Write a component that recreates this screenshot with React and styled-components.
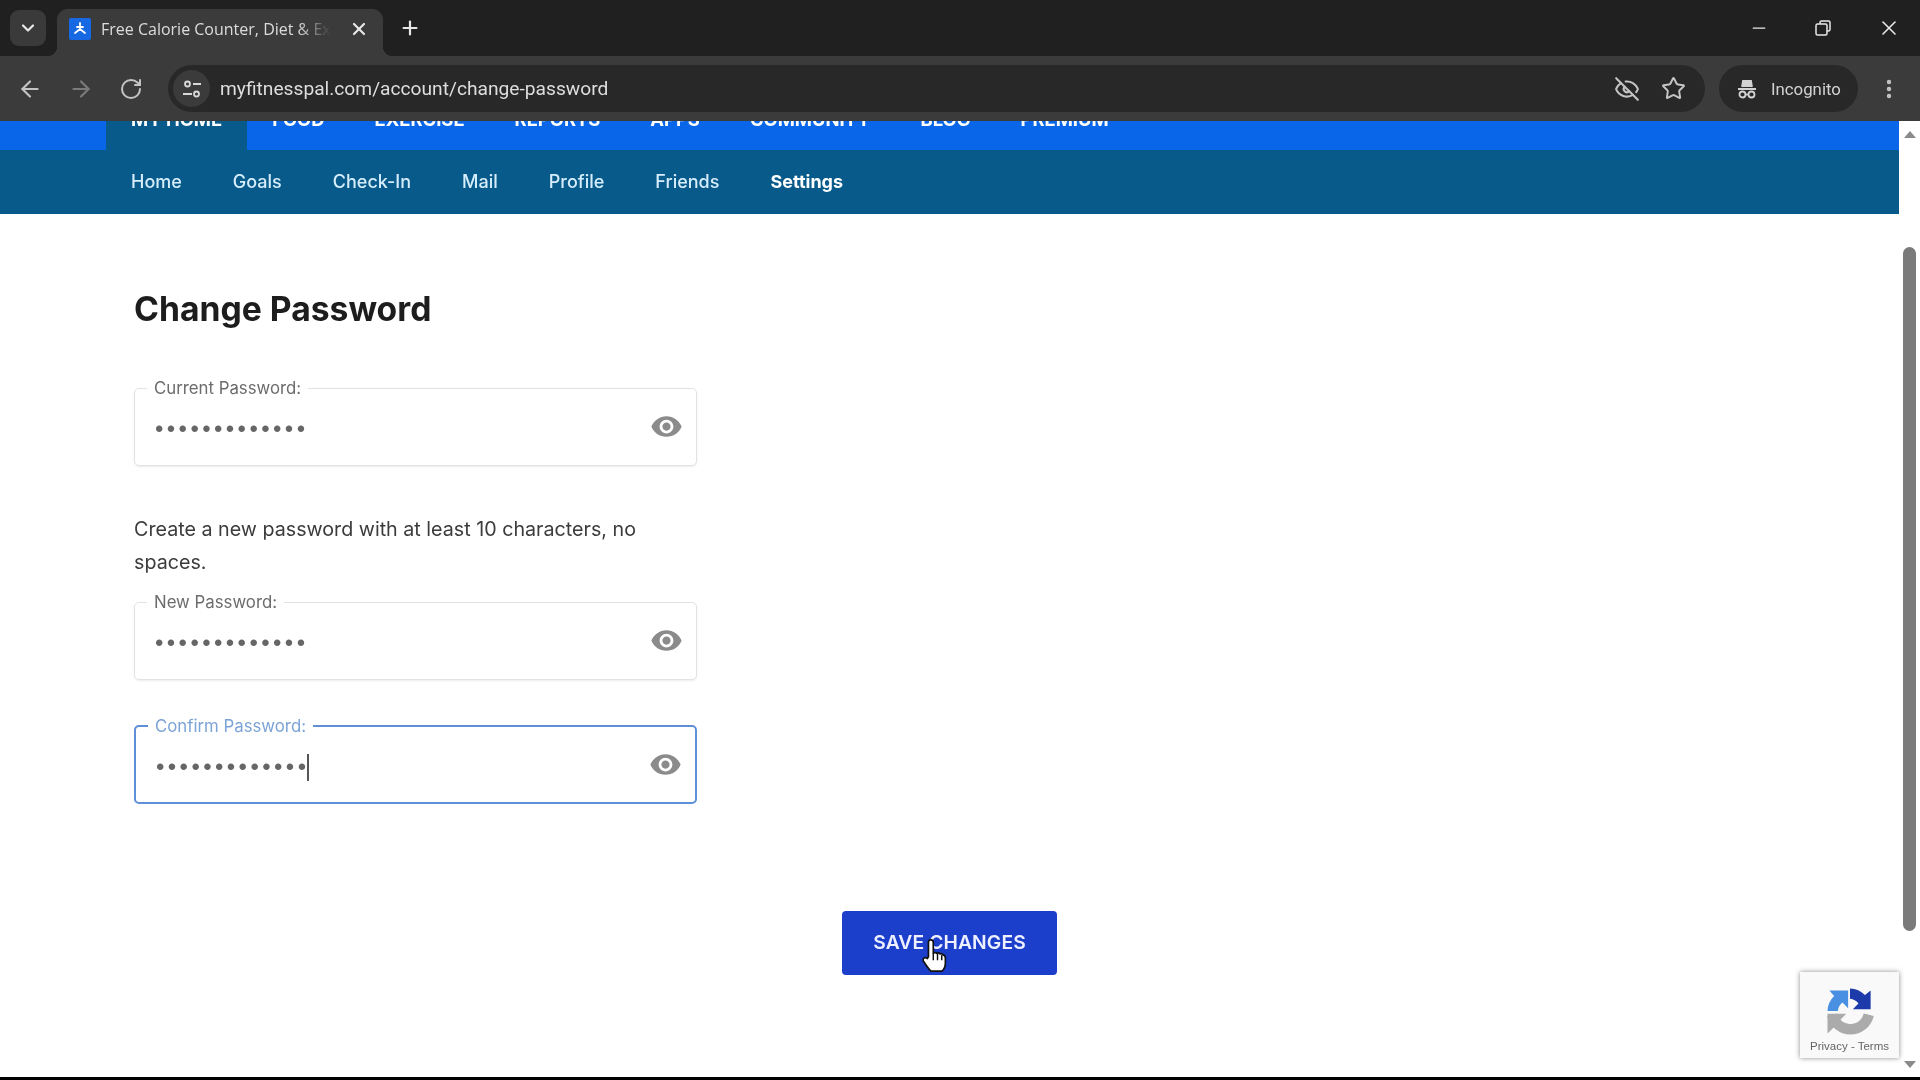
import React from "react";
import styled, { createGlobalStyle } from "styled-components";
import { ArrowLeft, ArrowRight, RotateCw, EyeOff, Star, X, Plus, Minus, ChevronDown, MoreVertical } from "lucide-react";
import { MdVisibility } from "react-icons/md";

const Global = createGlobalStyle`
  html, body { margin: 0; height: 100%; background: #000; overflow: hidden; }
  * { box-sizing: border-box; }
`;

const Frame = styled.div`
  height: 1080px; display: flex; flex-direction: column; overflow: hidden;
  font-family: Inter, "Liberation Sans", sans-serif;
  filter: blur(0.45px);
`;

const TabStrip = styled.div`
  height: 56px; flex: none; background: #202020; display: flex; align-items: flex-end;
  padding-left: 10px; color: #e8e8e8;
`;
const TabSearch = styled.div`
  width: 36px; height: 36px; margin-bottom: 10px; border-radius: 9px; background: #3a3a3a;
  display: flex; align-items: center; justify-content: center;
`;
const Tab = styled.div`
  position: relative; width: 326px; height: 47px; margin-left: 11px; padding: 0 14px 7px 12px;
  background: #3b3b3b; border-radius: 11px 11px 0 0; display: flex; align-items: center;
  &::before, &::after { content: ""; position: absolute; bottom: 0; width: 10px; height: 10px; }
  &::before { left: -10px; background: radial-gradient(circle at 0 0, transparent 10px, #3b3b3b 10.5px); }
  &::after { right: -10px; background: radial-gradient(circle at 100% 0, transparent 10px, #3b3b3b 10.5px); }
`;
const Favicon = styled.svg` width: 22px; height: 22px; flex: none; `;
const TabTitle = styled.span`
  width: 234px; margin-left: 10px; white-space: nowrap; overflow: hidden;
  font: 400 16px "Open Sans", Roboto, sans-serif; color: #dcdcdc;
  -webkit-mask-image: linear-gradient(90deg, #000 84%, transparent 98%);
  mask-image: linear-gradient(90deg, #000 84%, transparent 98%);
`;
const TabClose = styled.div` margin-left: auto; display: flex; `;
const NewTab = styled.div` margin: 0 0 10px 16px; height: 36px; display: flex; align-items: center; `;
const WindowControls = styled.div`
  margin-left: auto; height: 100%; display: flex; align-items: center; gap: 43px; padding: 0 19px 0 0;
`;
const RestoreIcon = styled.svg` width: 22px; height: 22px; `;

const Toolbar = styled.div`
  height: 65px; flex: none; background: #3b3b3b; display: flex; align-items: center;
  padding: 0 10px 0 17px; color: #c4c4c4;
`;
const NavIcons = styled.div` display: flex; align-items: center; gap: 25px; `;
const Omnibox = styled.div`
  width: 1537px; height: 47px; margin-left: 25px; border-radius: 24px; background: #282828;
  display: flex; align-items: center; padding: 0 19px 0 5px;
`;
const SiteBadge = styled.div`
  width: 37px; height: 37px; border-radius: 50%; background: #3b3b3b;
  display: flex; align-items: center; justify-content: center; flex: none;
`;
const Url = styled.span`
  margin-left: 10px; font: 400 19.2px Roboto, sans-serif; color: #dedede;
`;
const OmniIcons = styled.div` margin-left: auto; display: flex; align-items: center; gap: 21px; `;
const IncognitoPill = styled.div`
  width: 139px; height: 47px; margin-left: 14px; border-radius: 24px; background: #282828; flex: none;
  display: flex; align-items: center; gap: 13px; padding-left: 17px;
  font: 400 16.8px Roboto, sans-serif; color: #d2d2d2;
`;
const MenuDots = styled.div` margin-left: 19px; display: flex; `;

const Viewport = styled.div` flex: 1; min-height: 0; display: flex; background: #fff; position: relative; `;
const Page = styled.main` flex: 1; min-width: 0; display: flex; flex-direction: column; overflow: hidden; `;

const PrimaryNav = styled.nav`
  height: 29px; flex: none; background: #0a66e8; display: flex; padding-left: 106px; overflow: hidden;
`;
const PrimaryItem = styled.div`
  height: 29px; padding: 0 25px; background: ${p => (p.$active ? "#085a8a" : "transparent")};
  font: 700 18.4px/18px Inter, sans-serif; color: #fff; white-space: nowrap;
  & > span { margin-top: -11px; display: block; }
`;
const SecondaryNav = styled.nav`
  height: 64px; flex: none; background: #085a8a; display: flex; align-items: center; padding: 0 0 2px 131px; gap: 51px;
`;
const SecondaryItem = styled.a`
  font: ${p => (p.$active ? 700 : 500)} 18px Inter, sans-serif; color: ${p => (p.$active ? "#fff" : "#d6eefb")};
`;

const Content = styled.div` flex: 1; padding: 71px 0 0 134px; position: relative; `;
const Heading = styled.h1`
  margin: 0; font: 700 33.7px/48px Inter, sans-serif; color: #1d1d1d;
`;
const FieldBox = styled.fieldset`
  width: 563px; height: 89px; margin: ${p => p.$top}px 0 0; padding: 0 13px 0 12px;
  border: ${p => (p.$focus ? "2.5px solid #5f8fd6" : "1.5px solid #e2e2e2")}; border-radius: 5px;
  display: block; min-width: 0;
  box-shadow: ${p => (p.$focus ? "none" : "0 1px 2px rgba(0,0,0,.08)")};
`;
const FieldLegend = styled.legend`
  padding: 0 7px; font: 400 16.8px/22px Inter, sans-serif;
  color: ${p => (p.$focus ? "#7ba3d6" : "#6c6c6c")};
`;
const FieldRow = styled.div`
  height: 62px; display: flex; align-items: center; justify-content: space-between; padding-bottom: 7px;
`;
const Dots = styled.span`
  margin: 5px 0 0 8px; display: inline-flex; align-items: center; height: 32px;
  font: 400 24px "Liberation Sans", sans-serif; letter-spacing: 3.4px; color: #666;
`;
const Caret = styled.i`
  display: inline-block; width: 1.5px; height: 27px; background: #555; margin-left: -2px;
`;
const EyeIcon = styled(MdVisibility)` color: #8b8b8b; font-size: 33px; display: block; `;
const Help = styled.p`
  width: 530px; margin: 47px 0 0; font: 400 19.7px/33px Inter, sans-serif; color: #3c3c3c;
`;
const SaveRow = styled.div` margin-top: 107px; width: 100%; padding-right: 134px; display: flex; justify-content: center; `;
const SaveButton = styled.button`
  width: 215px; height: 64px; border: 0; border-radius: 4px; padding: 0 0 2px; background: #1b3ecb; color: #eef0ff;
  font: 600 19.3px Inter, sans-serif; letter-spacing: .1px;
`;
const Pointer = styled.svg`
  position: absolute; left: 920px; top: 816px; width: 29px; height: 37px;
`;
const Recaptcha = styled.div`
  position: absolute; right: 21px; bottom: 19px; width: 99px; height: 86px; background: #f9f9f9;
  box-shadow: 0 0 5px rgba(0,0,0,.45); display: flex; flex-direction: column; align-items: center; padding-top: 9px;
`;
const RecaptchaMark = styled.svg` width: 60px; height: 60px; `;
const RecaptchaLinks = styled.span`
  font: 400 11.5px "Liberation Sans", sans-serif; color: #666; margin-top: -1px;
`;
const Scrollbar = styled.aside`
  width: 21px; flex: none; background: #fff; display: flex; flex-direction: column; align-items: center; padding: 10px 0 9px;
`;
const ScrollArrow = styled.div`
  width: 0; height: 0; border-left: 6px solid transparent; border-right: 6px solid transparent;
  ${p => (p.$down ? "border-top: 7px solid #8a8a8a;" : "border-bottom: 7px solid #8a8a8a;")}
`;
const ScrollTrack = styled.div` flex: 1; width: 100%; padding: 109px 0 0 4px; `;
const ScrollThumb = styled.div` width: 13px; height: 684px; background: #7a7a7a; border-radius: 7px; `;
const BottomEdge = styled.div` height: 3px; flex: none; background: #000; `;

function PasswordField({ label, top, focus }) {
  return (
    <FieldBox $top={top} $focus={focus}>
      <FieldLegend $focus={focus}>{label}</FieldLegend>
      <FieldRow>
        <Dots>•••••••••••••{focus && <Caret />}</Dots>
        <EyeIcon />
      </FieldRow>
    </FieldBox>
  );
}

const primary = ["MY HOME", "FOOD", "EXERCISE", "REPORTS", "APPS", "COMMUNITY", "BLOG", "PREMIUM"];
const secondary = ["Home", "Goals", "Check-In", "Mail", "Profile", "Friends", "Settings"];
const arrow = "M32 8A24 24 0 0 1 48 15L54 10V30H35l6-6A13 13 0 0 0 32 19Z";

export default function App() {
  return (
    <Frame>
      <Global />
      <TabStrip>
        <TabSearch><ChevronDown size={20} strokeWidth={2.6} /></TabSearch>
        <Tab>
          <Favicon viewBox="0 0 22 22">
            <rect width="22" height="22" rx="2" fill="#1668e3" />
            <path d="M11 5v6M11 11l-5 4M11 11l5 4M8 9l6 0" stroke="#fff" strokeWidth="1.8" fill="none" strokeLinecap="round" />
          </Favicon>
          <TabTitle>Free Calorie Counter, Diet &amp; Exercise</TabTitle>
          <TabClose><X size={20} strokeWidth={2.6} /></TabClose>
        </Tab>
        <NewTab><Plus size={22} strokeWidth={2.4} /></NewTab>
        <WindowControls>
          <Minus size={20} strokeWidth={1.5} />
          <RestoreIcon viewBox="0 0 22 22" fill="none" stroke="#e8e8e8" strokeWidth="1.5">
            <rect x="4" y="7" width="11" height="11" rx="1.5" />
            <path d="M8 7V5.5A1.5 1.5 0 0 1 9.5 4h7A1.5 1.5 0 0 1 18 5.5v7a1.5 1.5 0 0 1-1.5 1.5H15" />
          </RestoreIcon>
          <X size={24} strokeWidth={1.6} />
        </WindowControls>
      </TabStrip>
      <Toolbar>
        <NavIcons>
          <ArrowLeft size={26} strokeWidth={2} />
          <ArrowRight size={26} strokeWidth={2} color="#7a7a7a" />
          <RotateCw size={24} strokeWidth={2} />
        </NavIcons>
        <Omnibox>
          <SiteBadge>
            <svg width="22" height="22" viewBox="0 0 22 22" fill="none" stroke="#d8d8d8" strokeWidth="1.8">
              <circle cx="6.5" cy="6" r="2.5" /><path d="M12 6h8M2 16h9" /><circle cx="15.5" cy="16" r="2.5" />
            </svg>
          </SiteBadge>
          <Url>myfitnesspal.com/account/change-password</Url>
          <OmniIcons>
            <EyeOff size={26} strokeWidth={1.9} />
            <Star size={25} strokeWidth={1.9} />
          </OmniIcons>
        </Omnibox>
        <IncognitoPill>
          <svg width="22" height="22" viewBox="0 0 22 22" fill="none" stroke="#d2d2d2" strokeWidth="1.8">
            <path d="M2 11h18M6 9l1-6h8l1 6" fill="#d2d2d2" />
            <circle cx="6.5" cy="16.5" r="3" /><circle cx="15.5" cy="16.5" r="3" /><path d="M9.5 16.5h3" />
          </svg>
          Incognito
        </IncognitoPill>
        <MenuDots><MoreVertical size={24} strokeWidth={2.4} /></MenuDots>
      </Toolbar>
      <Viewport>
        <Page>
          <PrimaryNav>
            {primary.map((t, i) => (
              <PrimaryItem key={t} $active={i === 0}><span>{t}</span></PrimaryItem>
            ))}
          </PrimaryNav>
          <SecondaryNav>
            {secondary.map(t => <SecondaryItem key={t} $active={t === "Settings"}>{t}</SecondaryItem>)}
          </SecondaryNav>
          <Content>
            <Heading>Change Password</Heading>
            <PasswordField label="Current Password:" top={44} />
            <Help>Create a new password with at least 10 characters, no spaces.</Help>
            <PasswordField label="New Password:" top={12} />
            <PasswordField label="Confirm Password:" top={35} focus />
            <SaveRow><SaveButton>SAVE CHANGES</SaveButton></SaveRow>
          </Content>
        </Page>
        <Scrollbar>
          <ScrollArrow />
          <ScrollTrack><ScrollThumb /></ScrollTrack>
          <ScrollArrow $down />
        </Scrollbar>
        <Pointer viewBox="0 0 24 30">
          <path d="M9 2a2 2 0 0 1 2 2v9l1-.3a2 2 0 0 1 2 .6 2 2 0 0 1 2.6.4 2 2 0 0 1 2.6.8c1.2.4 1.8 1.4 1.8 2.5v4c0 3-1.5 6-3 7H9c-1.5-1.5-4-5-6-8-.8-1.2-.5-2.5.5-3 .9-.5 2-.2 2.5.5L7 16V4a2 2 0 0 1 2-2z" fill="#fff" stroke="#111" strokeWidth="1.4" strokeLinejoin="round" />
          <path d="M11 13v6M14.5 13.5V19M18 14.5V19" stroke="#111" strokeWidth="1.2" fill="none" />
        </Pointer>
        <Recaptcha>
          <RecaptchaMark viewBox="0 0 64 64">
            <path d="M13 36A20 20 0 0 0 52 36" fill="none" stroke="#ababab" strokeWidth="11" />
            <path d="M8 56V35h20l-6 6-8 9z" fill="#ababab" />
            <path d={arrow} fill="#1c3aa9" />
            <path d={arrow} fill="#4a90e2" transform="rotate(-90 32 32)" />
          </RecaptchaMark>
          <RecaptchaLinks>Privacy - Terms</RecaptchaLinks>
        </Recaptcha>
      </Viewport>
      <BottomEdge />
    </Frame>
  );
}
